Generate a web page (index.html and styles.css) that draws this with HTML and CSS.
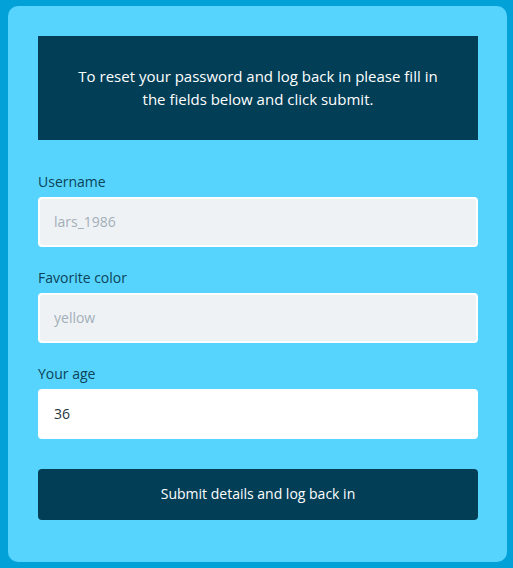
FILE: index.html
```html
<!DOCTYPE html>
<html>
<head>
<meta charset="utf-8">
<link rel="stylesheet" href="styles.css">
</head>
<body>
<div class="card">
  <div class="notice">To reset your password and log back in please fill in the fields below and click submit.</div>
  <form class="form">
    <label class="field">
      <span class="label">Username</span>
      <input class="input locked" type="text" placeholder="lars_1986">
    </label>
    <label class="field">
      <span class="label">Favorite color</span>
      <input class="input locked" type="text" placeholder="yellow">
    </label>
    <label class="field">
      <span class="label">Your age</span>
      <input class="input" type="text" value="36">
    </label>
    <button class="submit" type="button">Submit details and log back in</button>
  </form>
</div>
</body>
</html>
```
FILE: styles.css
```css
html, body {
  margin: 0;
  padding: 0;
}
body {
  background: #02a2d8;
  padding: 6px 6px 6px 8px;
  font-family: "Open Sans", "Noto Sans", sans-serif;
  height: 568px;
  box-sizing: border-box;
}
.card {
  width: 499px;
  height: 556px;
  box-sizing: border-box;
  background: #56d4fe;
  border-radius: 10px;
  padding: 30px 29px 30px 30px;
}
.notice {
  background: #023e56;
  color: #ffffff;
  height: 104px;
  box-sizing: border-box;
  display: flex;
  align-items: center;
  justify-content: center;
  text-align: center;
  padding: 0 36px;
  font-size: 15px;
  line-height: 23px;
}
.form {
  display: flex;
  flex-direction: column;
  margin-top: 32px;
}
.field {
  display: flex;
  flex-direction: column;
  margin-bottom: 21px;
}
.label {
  color: #0c4358;
  font-size: 14px;
  line-height: 20px;
  margin-bottom: 5px;
}
.input {
  height: 50px;
  box-sizing: border-box;
  border: 2px solid #ffffff;
  border-radius: 4px;
  background: #ffffff;
  padding: 0 14px 1px;
  font-family: inherit;
  font-size: 14px;
  color: #1e3540;
  outline: none;
}
.input.locked {
  background: #eef2f5;
}
.input::placeholder {
  color: #a3afb8;
}
.submit {
  margin-top: 9px;
  height: 51px;
  padding: 0 0 2px;
  border: none;
  border-radius: 4px;
  background: #023e56;
  color: #ffffff;
  font-family: inherit;
  font-size: 14px;
}
```
